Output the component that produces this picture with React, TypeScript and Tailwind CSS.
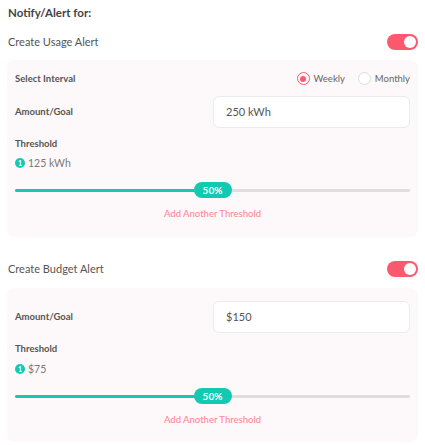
import React from 'react';

const Toggle: React.FC = () => (
  <div className="w-[31px] h-[16px] rounded-full bg-[#fb5a6e] flex items-center justify-end px-[2px]">
    <div className="w-[12px] h-[12px] rounded-full bg-white" />
  </div>
);

const Slider: React.FC<{ value: number }> = ({ value }) => (
  <div className="relative h-[16px] flex items-center">
    <div className="w-full h-[3px] rounded-full bg-[#dedede]">
      <div className="h-full rounded-full bg-[#14c9b1]" style={{ width: `${value}%` }} />
    </div>
    <div
      className="absolute top-0 h-[16px] w-[38px] rounded-full bg-[#14c9b1] text-white text-[10px] leading-[16px] font-bold flex items-center justify-center"
      style={{ left: `calc(${value}% - 19px)` }}
    >
      {value}%
    </div>
  </div>
);

const ThresholdBlock: React.FC<{ label: string; gap: string }> = ({ label, gap }) => (
  <div>
    <div className="text-[9.5px] leading-[12px] font-bold text-[#555]">Threshold</div>
    <div className={`${gap} flex items-center gap-[3px] text-[10.5px] leading-[12px] text-[#7a7a7a]`}>
      <span className="w-[10px] h-[10px] rounded-full bg-[#14c9b1] text-white text-[7px] font-bold flex items-center justify-center">1</span>
      {label}
    </div>
    <div className="mt-[13px]">
      <Slider value={50} />
    </div>
    <div className="mt-[10px] text-center text-[9.5px] leading-[12px] font-medium text-[#fb8a96]">Add Another Threshold</div>
  </div>
);

const AmountRow: React.FC<{ value: string }> = ({ value }) => (
  <div className="flex items-center justify-between">
    <div className="text-[9.5px] leading-[12px] font-bold text-[#555]">Amount/Goal</div>
    <div className="w-[197px] h-[32px] rounded-[6px] bg-white border border-[#ececec] flex items-center px-[12px] text-[11px] text-[#555]">
      {value}
    </div>
  </div>
);

const Radio: React.FC<{ checked?: boolean; label: string }> = ({ checked, label }) => (
  <div className="flex items-center gap-[4px] text-[9.5px] leading-[12px] text-[#666]">
    <span
      className={
        checked
          ? 'w-[13px] h-[13px] rounded-full border border-[#fb5a6e] bg-white flex items-center justify-center'
          : 'w-[13px] h-[13px] rounded-full border border-[#dcdcdc] bg-white'
      }
    >
      {checked && <span className="w-[6px] h-[6px] rounded-full bg-[#fb5a6e]" />}
    </span>
    {label}
  </div>
);

export default function App() {
  return (
    <div className="w-[425px] h-[445px] bg-white px-[7px] pt-[6px] overflow-hidden" style={{ fontFamily: 'Lato, "Noto Sans", sans-serif' }}>
      <div className="text-[11.5px] leading-[14px] font-bold text-[#444] pl-[1px]">Notify/Alert for:</div>

      <div className="mt-[14px] flex items-center justify-between">
        <div className="text-[11px] leading-[14px] text-[#555] pl-[1px]">Create Usage Alert</div>
        <Toggle />
      </div>

      <div className="mt-[10px] rounded-[8px] bg-[#fdf8f9] px-[8px] pt-[12px] pb-[17px]">
        <div className="flex items-center justify-between">
          <div className="text-[9.5px] leading-[12px] font-bold text-[#555]">Select Interval</div>
          <div className="flex items-center gap-[13px]">
            <Radio checked label="Weekly" />
            <Radio label="Monthly" />
          </div>
        </div>
        <div className="mt-[11px]">
          <AmountRow value="250 kWh" />
        </div>
        <div className="mt-[10px]">
          <ThresholdBlock label="125 kWh" gap="mt-[7px]" />
        </div>
      </div>

      <div className="mt-[24px] flex items-center justify-between">
        <div className="text-[11px] leading-[14px] text-[#555] pl-[1px]">Create Budget Alert</div>
        <Toggle />
      </div>

      <div className="mt-[11px] rounded-[8px] bg-[#fdf8f9] px-[8px] pt-[13px] pb-[16px]">
        <AmountRow value="$150" />
        <div className="mt-[10px]">
          <ThresholdBlock label="$75" gap="mt-[8px]" />
        </div>
      </div>
    </div>
  );
}
